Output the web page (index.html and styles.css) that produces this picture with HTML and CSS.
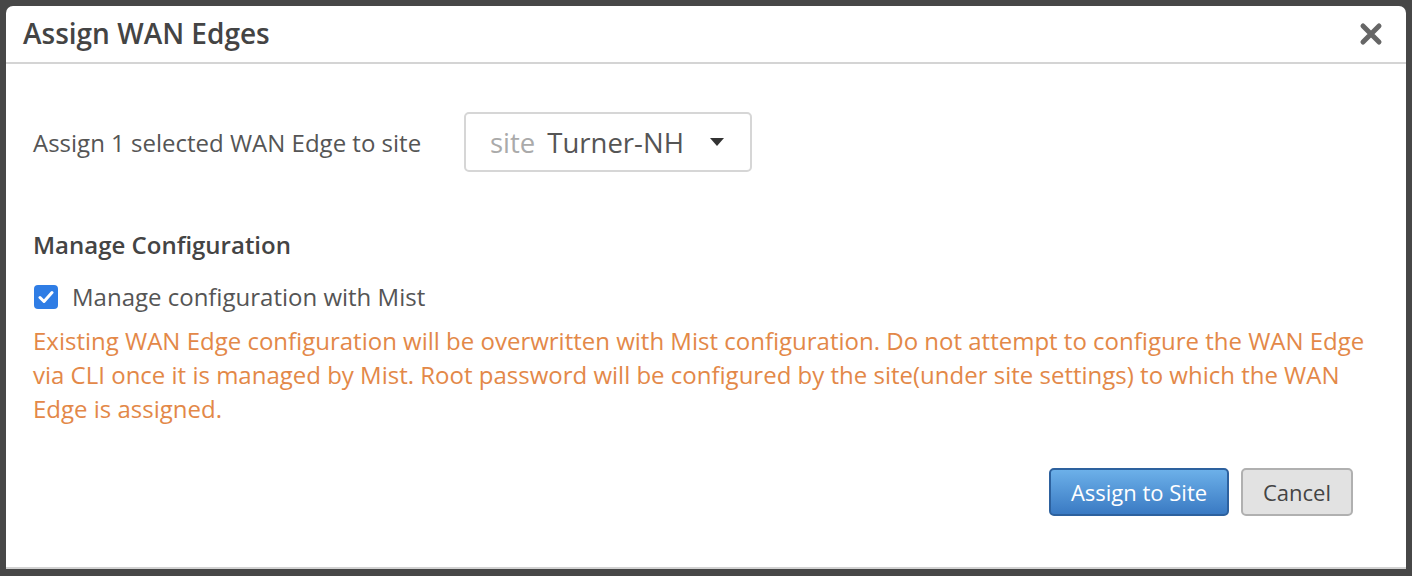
FILE: index.html
```html
<!DOCTYPE html>
<html>
<head>
<meta charset="utf-8">
<link rel="stylesheet" href="styles.css">
</head>
<body>
<div class="backdrop">
  <div class="dialog">
    <div class="dialog-header">
      <h1 class="dialog-title">Assign WAN Edges</h1>
      <button class="close-btn" aria-label="Close">
        <svg width="24" height="24" viewBox="0 0 24 24"><path d="M4 4 L20 20 M20 4 L4 20" stroke="#666" stroke-width="5" stroke-linecap="round"/></svg>
      </button>
    </div>
    <div class="dialog-body">
      <div class="assign-row">
        <span class="assign-label">Assign 1 selected WAN Edge to site</span>
        <div class="site-select">
          <span class="site-prefix">site</span>
          <span class="site-value">Turner-NH</span>
          <svg class="caret" width="14" height="8" viewBox="0 0 14 8"><path d="M0 0 H14 L7 8 Z" fill="#333"/></svg>
        </div>
      </div>
      <h2 class="section-title">Manage Configuration</h2>
      <label class="check-row">
        <span class="checkbox">
          <svg width="16" height="14" viewBox="0 0 16 14"><path d="M2 7.5 L6 11.5 L14 2.5" fill="none" stroke="#fff" stroke-width="3" stroke-linecap="round" stroke-linejoin="round"/></svg>
        </span>
        <span class="check-label">Manage configuration with Mist</span>
      </label>
      <p class="warning">Existing WAN Edge configuration will be overwritten with Mist configuration. Do not attempt to configure the WAN Edge via CLI once it is managed by Mist. Root password will be configured by the site(under site settings) to which the WAN Edge is assigned.</p>
      <div class="actions">
        <button class="btn btn-primary">Assign to Site</button>
        <button class="btn btn-default">Cancel</button>
      </div>
    </div>
  </div>
</div>
</body>
</html>
```
FILE: styles.css
```css
* { box-sizing: border-box; }
html, body { margin: 0; padding: 0; }
body {
  width: 1412px;
  height: 576px;
  overflow: hidden;
  background: #474747;
  font-family: "Open Sans", "Noto Sans", sans-serif;
}
.backdrop {
  padding: 6px 6px 0 6px;
}
.dialog {
  width: 1400px;
  height: 563px;
  background: #fff;
  border-radius: 7px 7px 0 0;
  border-bottom: 2px solid #d2d2d2;
  display: flex;
  flex-direction: column;
}
.dialog-header {
  height: 58px;
  border-bottom: 2px solid #d4d4d4;
  display: flex;
  align-items: center;
  justify-content: space-between;
  padding: 0 21px 0 17px;
}
.dialog-title {
  margin: 0;
  font-size: 28px;
  font-weight: 600;
  color: #444;
  line-height: 36px;
  padding-bottom: 2px;
}
.close-btn {
  border: 0;
  background: none;
  padding: 0;
  width: 28px;
  height: 28px;
  display: flex;
  align-items: center;
  justify-content: center;
  cursor: pointer;
}
.dialog-body {
  padding: 48px 40px 0 27px;
  display: flex;
  flex-direction: column;
}
.assign-row {
  display: flex;
  align-items: center;
}
.assign-label {
  font-size: 24px;
  color: #555;
  width: 431px;
}
.site-select {
  width: 288px;
  height: 60px;
  border: 2px solid #d6d6d6;
  border-radius: 5px;
  display: flex;
  align-items: center;
  padding: 0 26px 0 24px;
  font-size: 27.5px;
}
.site-prefix { color: #aaa; margin-right: 12px; }
.site-value { color: #555; flex: 1; white-space: nowrap; }
.caret { display: block; }
.section-title {
  margin: 57px 0 0 0;
  font-size: 24px;
  font-weight: 600;
  color: #444;
  line-height: 32px;
}
.check-row {
  display: flex;
  align-items: center;
  margin-top: 20px;
  margin-left: 1px;
  height: 32px;
}
.checkbox {
  width: 24px;
  height: 24px;
  border-radius: 4px;
  background: #2f7de5;
  display: flex;
  align-items: center;
  justify-content: center;
  margin-right: 14px;
}
.check-label {
  font-size: 24px;
  color: #555;
  line-height: 32px;
}
.warning {
  margin: 11px 0 0 0;
  font-size: 24px;
  line-height: 34px;
  color: #e38848;
}
.actions {
  display: flex;
  justify-content: flex-end;
  gap: 12px;
  margin-top: 42px;
  padding-right: 13px;
}
.btn {
  height: 48px;
  font-family: "Open Sans", "Noto Sans", sans-serif;
  font-size: 22px;
  border-radius: 5px;
  padding: 0;
  white-space: nowrap;
  cursor: pointer;
}
.btn-primary {
  width: 180px;
  color: #fff;
  background: linear-gradient(#6cb0e9, #3a7ac3);
  border: 2px solid #2d619e;
}
.btn-default {
  width: 112px;
  color: #444;
  background: #e2e2e2;
  border: 2px solid #b0b0b0;
}
```
